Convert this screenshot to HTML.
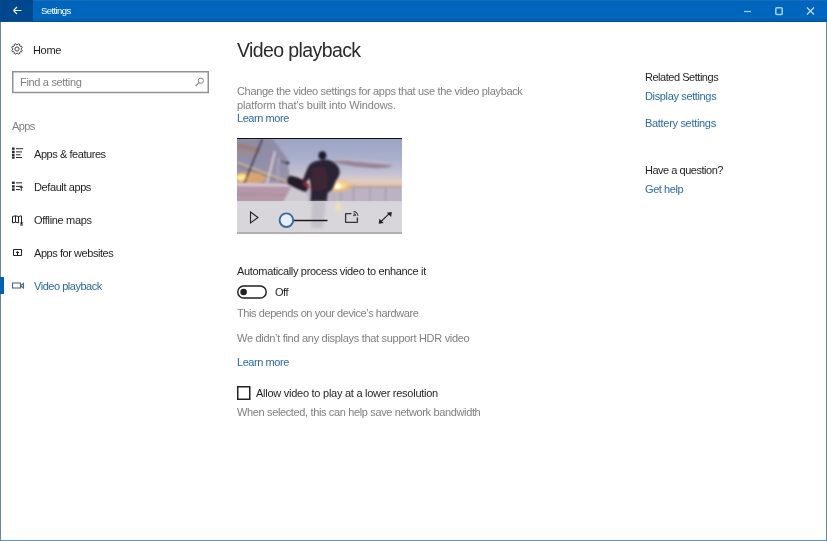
<!DOCTYPE html>
<html><head><meta charset="utf-8">
<style>
html,body{margin:0;padding:0;width:827px;height:541px;overflow:hidden;background:#fff;}
body{font-family:"Liberation Sans",sans-serif;position:relative;color:#000;}
.a{position:absolute;white-space:nowrap;line-height:1;will-change:transform;}
#tb{position:absolute;left:0;top:0;width:827px;height:22px;background:#0066bd;}
#back{position:absolute;left:0;top:0;width:33px;height:22px;background:#00478e;}
.t11{font-size:11px;letter-spacing:-0.4px;}
.gray{color:#7f7f7f;}
.link{color:#2b6a9f;}
.dark{color:#1e1e1e;}
</style></head><body>
<div id="tb"></div>
<div id="back"></div>
<svg class="a" style="left:0;top:0" width="827" height="22">
  <path d="M13.5 10.5 H21.5 M13.5 10.5 L17 7 M13.5 10.5 L17 14" stroke="#e8f2fb" stroke-width="1.2" fill="none"/>
  <rect x="33" y="0" width="794" height="1" fill="#1a6dbb"/>
  <rect x="33" y="19" width="794" height="2" fill="#005eac" opacity="0.6"/>
  <rect x="0" y="21" width="827" height="1" fill="#00529c"/>
  <path d="M744 11.5 H751" stroke="#a9d0f2" stroke-width="1.2"/>
  <rect x="775.8" y="7.8" width="6.4" height="6.6" rx="1" stroke="#a9d0f2" stroke-width="1.5" fill="none"/>
  <path d="M807 7.5 L814 14.5 M814 7.5 L807 14.5" stroke="#c6e0f6" stroke-width="1.1" fill="none"/>
</svg>
<div class="a" style="left:41px;top:5.5px;font-size:9.5px;color:#fff;letter-spacing:-0.6px">Settings</div>

<!-- window borders -->
<div class="a" style="left:0;top:22px;width:1px;height:519px;background:#678a92"></div>
<div class="a" style="left:826px;top:22px;width:1px;height:519px;background:#6a8a8c"></div>
<div class="a" style="left:0;top:540px;width:827px;height:1px;background:#6392b9"></div>

<!-- sidebar -->
<svg class="a" style="left:10.2px;top:42.3px" width="14" height="14" viewBox="0 0 14 14">
  <path d="M11.09 7.30 L12.21 8.23 L11.55 9.81 L10.10 9.68 L9.68 10.10 L9.81 11.55 L8.23 12.21 L7.30 11.09 L6.70 11.09 L5.77 12.21 L4.19 11.55 L4.32 10.10 L3.90 9.68 L2.45 9.81 L1.79 8.23 L2.91 7.30 L2.91 6.70 L1.79 5.77 L2.45 4.19 L3.90 4.32 L4.32 3.90 L4.19 2.45 L5.77 1.79 L6.70 2.91 L7.30 2.91 L8.23 1.79 L9.81 2.45 L9.68 3.90 L10.10 4.32 L11.55 4.19 L12.21 5.77 L11.09 6.70 Z" stroke="#3a3a3a" stroke-width="0.95" fill="none" stroke-linejoin="round"/>
  <circle cx="7" cy="7" r="2.1" stroke="#3a3a3a" stroke-width="0.95" fill="none"/>
</svg>
<div class="a t11 dark" style="letter-spacing:-0.33px;left:33px;top:45px">Home</div>
<svg class="a" style="left:0;top:60px" width="220" height="40"><rect x="12.75" y="11.75" width="195.5" height="20.75" stroke="#929292" stroke-width="1.5" fill="none"/></svg>
<div class="a t11 gray" style="letter-spacing:-0.32px;left:20px;top:77px">Find a setting</div>
<svg class="a" style="left:190px;top:70px" width="20" height="20" viewBox="190 70 20 20">
  <circle cx="200.9" cy="80.7" r="2.6" stroke="#808080" stroke-width="1" fill="none"/>
  <path d="M199 82.6 L195.6 86" stroke="#808080" stroke-width="1.1"/>
</svg>
<div class="a t11 gray" style="letter-spacing:-0.6px;left:12px;top:121px">Apps</div>

<svg class="a" style="left:0;top:140px" width="30" height="160" viewBox="0 140 30 160">
  <g fill="#2a2a2a">
    <rect x="12" y="147.5" width="2.6" height="2.3"/><rect x="12" y="150.7" width="2.6" height="2.3"/>
    <rect x="12" y="153.7" width="2.6" height="2.3"/><rect x="12" y="156.4" width="2.6" height="2.3"/>
  </g>
  <g stroke="#2a2a2a" stroke-width="1">
    <path d="M16 148.7 H23.2 M16 151.9 H22 M16 154.8 H20.5 M16 157.5 H22"/>
  </g>
  <g fill="#2a2a2a">
    <rect x="12" y="181.6" width="2.7" height="2.4"/><rect x="12" y="185.2" width="2.7" height="2.4"/><rect x="12" y="188.4" width="2.7" height="2.4"/>
  </g>
  <g stroke="#2a2a2a" stroke-width="1" fill="none">
    <path d="M16 182.8 H22 M16 186.4 H21 M16 189.6 H20 M21.3 185.5 V191 M19.8 187.2 H23"/>
  </g>
  <g stroke="#222" stroke-width="1" fill="none">
    <path d="M12.5 216.5 L15.5 215.8 L18.5 216.5 L21 215.8 M12.5 216.5 V222.8 L15.5 222.2 L18.5 222.8 M15.5 215.8 V222.2 M18.5 216.5 V222.8 M21.5 215.8 V224 M19.8 222.4 L21.5 224 L23.2 222.4 M20 225 H23"/>
  </g>
  <g stroke="#222" stroke-width="1" fill="none">
    <path d="M13.5 255.5 V249.5 H21.5 V255.5 H13.5 M17.5 255.5 V251.5 M16 253 L17.5 251.5 L19 253"/>
  </g>
  <g stroke="#4d6a80" stroke-width="1.1" fill="none">
    <rect x="12.5" y="283" width="8" height="5"/>
    <path d="M21 285.5 L23.5 283.5 V288 L21 286"/>
  </g>
</svg>
<div class="a t11 dark" style="letter-spacing:-0.44px;left:34px;top:149px">Apps &amp; features</div>
<div class="a t11 dark" style="letter-spacing:-0.4px;left:34px;top:182px">Default apps</div>
<div class="a t11 dark" style="letter-spacing:-0.32px;left:34px;top:215px">Offline maps</div>
<div class="a t11 dark" style="letter-spacing:-0.44px;left:34px;top:248px">Apps for websites</div>
<div class="a t11 link" style="letter-spacing:-0.47px;left:34px;top:281px">Video playback</div>
<div class="a" style="left:0;top:277px;width:4px;height:17px;background:#0063b1"></div>

<!-- main -->
<div class="a" style="left:237px;top:40.5px;font-size:19.5px;color:#2a2a2a;letter-spacing:-0.6px">Video playback</div>
<div class="a t11 gray" style="letter-spacing:-0.336px;left:237px;top:86px;">Change the video settings for apps that use the video playback</div>
<div class="a t11 gray" style="letter-spacing:-0.14px;left:237px;top:100px;">platform that’s built into Windows.</div>
<div class="a t11 link" style="letter-spacing:-0.44px;left:237px;top:113px">Learn more</div>

<svg class="a" style="left:237px;top:138px" width="165" height="96" viewBox="0 0 165 96">
  <defs>
    <linearGradient id="sky" x1="0" y1="0" x2="0" y2="1">
      <stop offset="0" stop-color="#9ca4c4"/>
      <stop offset="0.22" stop-color="#aab0cc"/>
      <stop offset="0.36" stop-color="#c2c0d2"/>
      <stop offset="0.46" stop-color="#e2d0c8"/>
      <stop offset="0.5" stop-color="#eed4b8"/>
      <stop offset="0.53" stop-color="#cfc6d2"/>
      <stop offset="1" stop-color="#d0cad6"/>
    </linearGradient>
    <radialGradient id="sun" cx="0.5" cy="0.5" r="0.5">
      <stop offset="0" stop-color="#fffbe0"/>
      <stop offset="0.3" stop-color="#ffe090" stop-opacity="0.95"/>
      <stop offset="1" stop-color="#f0a860" stop-opacity="0"/>
    </radialGradient>
    <linearGradient id="glass" x1="0" y1="0" x2="0" y2="1">
      <stop offset="0" stop-color="#8a8494"/>
      <stop offset="0.3" stop-color="#a09090"/>
      <stop offset="0.7" stop-color="#b89a80"/>
      <stop offset="0.82" stop-color="#e0a860"/>
      <stop offset="1" stop-color="#a89090"/>
    </linearGradient>
    <filter id="bl" x="-10%" y="-10%" width="120%" height="120%"><feGaussianBlur stdDeviation="1"/></filter>
    <filter id="bl3" x="-200%" y="-100%" width="500%" height="300%"><feGaussianBlur stdDeviation="1.6"/></filter>
  </defs>
  <rect x="0" y="0" width="165" height="96" fill="url(#sky)"/>
  <g filter="url(#bl)">
    <path d="M-2 1 L36 1 L50 20 L54 47 L-2 47 Z" fill="#8c86a0" opacity="0.8"/>
    <path d="M0 5 Q12 7 24 11 L23 15 Q10 12 0 10.5 Z" fill="#a07c6c" opacity="0.8"/>
    <path d="M0 12.5 Q8 14 18 16 L17 18.5 Q8 17 0 16 Z" fill="#a88878" opacity="0.55"/>
    <ellipse cx="11" cy="40" rx="18" ry="6" fill="#eaa860" opacity="0.8"/>
    <ellipse cx="5" cy="39.5" rx="6" ry="3.2" fill="#ffe890"/>
    <path d="M0 24.5 L51 44" stroke="#c0ac9c" stroke-width="2.6"/>
    <path d="M0 26.6 L51 46" stroke="#5e5058" stroke-width="0.9" opacity="0.8"/>
    <path d="M25.6 0.5 L7.3 45" stroke="#3a3648" stroke-width="1.8"/>
    <path d="M38 13.2 L29.8 46.3" stroke="#ddd2d6" stroke-width="1.6"/>
    <path d="M41.5 20 L40.5 44" stroke="#b8b0c0" stroke-width="1"/>
    <path d="M44 23 L49 25" stroke="#555064" stroke-width="1.5"/>
    <ellipse cx="50.5" cy="24.8" rx="2" ry="1.6" fill="#2e2a38"/>
    <path d="M-2 45 L56 46 L48 64 L-2 64 Z" fill="#b498aa"/>
    <path d="M-2 45 L56 46 L55 48.5 L-2 48 Z" fill="#d8cad4"/>
    <path d="M-2 55 L50 56 L49 58 L-2 57.5 Z" fill="#a88898" opacity="0.6"/>
    <path d="M56 46 L68 47 L74 64 L46 64 Z" fill="#cdc8d2"/>
    <path d="M68 49 L165 50 L165 64 L72 64 Z" fill="#bcb2c1"/>
    <path d="M62 47.2 L165 47.6 L165 50 L62 50 Z" fill="#8e8498" opacity="0.55"/>
    <path d="M104 50 V63 M116.6 50 V63 M133 50 V63 M148.6 50 V63" stroke="#9a90a6" stroke-width="1"/>
    <path d="M90 47 Q120 44 165 46" stroke="#e8b890" stroke-width="3" opacity="0.5" fill="none"/>
    <path d="M94 23.5 Q105 21.5 118 24 Q135 25 156 27.5 Q150 31 135 30 Q115 29 94 23.5 Z" fill="#907888" opacity="0.8"/>
    <path d="M96 22 Q120 20 150 25" stroke="#d8b8c0" stroke-width="1.2" opacity="0.6" fill="none"/>
  </g>
  <ellipse cx="100.5" cy="48" rx="18" ry="8" fill="url(#sun)"/><circle cx="100.5" cy="48" r="2.8" fill="#fffbe8" filter="url(#bl)"/>
  <g filter="url(#bl)">
    <path d="M52.5 38 Q51 39 50.3 42 Q50 45.5 52 46.5 Q60 51 67 53.5 Q70 54.5 70.5 51 Q71 46 68 43 Q64 40.5 56 38.3 Q54 37.6 52.5 38 Z" fill="#221c28"/>
    <path d="M81.8 22.5 Q78 23 75.2 24.8 Q72.5 26.2 71.9 28.1 Q70.5 30 69.6 32.5 Q68 36 66.9 39.2 Q65.5 42 65.2 43.6 Q65.5 45.5 66.9 45.8 Q70 44 72.4 40.3 L73.5 47 Q74 51 74.1 53.6 L73.5 64 L89.6 64 L90.7 54.7 Q93 53 95.2 51.4 Q97.5 47.5 98.5 43.6 Q102 39 102.9 34.7 Q102.5 30.5 100.7 28.1 Q98 25 95.2 23.6 Q92 22 88.5 21.4 Z" fill="#2a2434"/>
    <path d="M74.5 31 Q80 27.5 88 29.5 Q92 38 90 50 Q84 55 76 52 Q74 42 74.5 31 Z" fill="#4c2638" opacity="0.6"/>
    <path d="M66 44 Q69 43 72 46 L72 51 Q68 50 66 47 Z" fill="#80303c" opacity="0.8"/>
    <ellipse cx="85.4" cy="17.5" rx="4" ry="4.3" fill="#1c1a26"/>
  </g>
  <rect x="0" y="0" width="165" height="1" fill="#111"/>
  <rect x="0" y="63" width="165" height="33" fill="#d8d7dc" opacity="0.9"/>
  <path d="M75 63 L74 90 L86 90 L89 63 Z" fill="#b4b0bc" opacity="0.55" filter="url(#bl3)"/>
  <ellipse cx="101" cy="69" rx="2.5" ry="5" fill="#f4e6a0" opacity="0.7" filter="url(#bl3)"/>
  <rect x="0" y="94" width="165" height="2" fill="#b0afb4"/>
  <path d="M13.5 74 L21 79.5 L13.5 85 Z" stroke="#222" stroke-width="1.1" fill="none"/>
  <path d="M56 82.5 H90.5" stroke="#1a1a1a" stroke-width="1.3"/>
  <circle cx="49.4" cy="82.2" r="6.8" fill="#e8eef8" stroke="#3a6a9a" stroke-width="1.9"/>
  <path d="M114.5 75.6 H109 Q108.6 75.6 108.6 76 V84 Q108.6 84.4 109 84.4 H120 Q120.4 84.4 120.4 84 V79.5" stroke="#333" stroke-width="1.3" fill="none"/>
  <path d="M116.6 73.6 A4.2 4.2 0 0 1 120.8 77.8 M116.6 75.8 A2 2 0 0 1 118.6 77.8" stroke="#333" stroke-width="1.1" fill="none"/>
  <circle cx="117" cy="77.4" r="0.8" fill="#333"/>
  <path d="M143.5 84 L153 74.8" stroke="#222" stroke-width="1.1" fill="none"/>
  <path d="M141.7 85.8 L142.4 80.8 L146.7 85.1 Z M154.8 74 L154.1 79 L149.8 74.7 Z" fill="#222"/>
</svg>

<div class="a t11 dark" style="letter-spacing:-0.33px;left:237px;top:266px">Automatically process video to enhance it</div>
<svg class="a" style="left:236px;top:284px" width="32" height="16">
  <rect x="1.75" y="2" width="28.5" height="12" rx="6" stroke="#222" stroke-width="1.5" fill="none"/>
  <circle cx="7.6" cy="8" r="3.3" fill="#222"/>
</svg>
<div class="a t11 dark" style="letter-spacing:-0.5px;left:275px;top:287px">Off</div>
<div class="a t11 gray" style="letter-spacing:-0.42px;left:237px;top:308px">This depends on your device’s hardware</div>
<div class="a t11 gray" style="letter-spacing:-0.3px;left:237px;top:333px">We didn’t find any displays that support HDR video</div>
<div class="a t11 link" style="letter-spacing:-0.44px;left:237px;top:357px">Learn more</div>
<svg class="a" style="left:236px;top:385px" width="16" height="16"><rect x="1.75" y="1.75" width="12" height="12.5" stroke="#222" stroke-width="1.5" fill="none"/></svg>
<div class="a t11 dark" style="letter-spacing:-0.26px;left:256px;top:388px">Allow video to play at a lower resolution</div>
<div class="a t11 gray" style="letter-spacing:-0.36px;left:237px;top:407px">When selected, this can help save network bandwidth</div>

<!-- right -->
<div class="a t11 dark" style="letter-spacing:-0.47px;left:645px;top:72px">Related Settings</div>
<div class="a t11 link" style="letter-spacing:-0.36px;left:645px;top:91px">Display settings</div>
<div class="a t11 link" style="letter-spacing:-0.31px;left:645px;top:118px">Battery settings</div>
<div class="a t11 dark" style="letter-spacing:-0.48px;left:645px;top:165px">Have a question?</div>
<div class="a t11 link" style="letter-spacing:-0.43px;left:645px;top:184px">Get help</div>
</body></html>
